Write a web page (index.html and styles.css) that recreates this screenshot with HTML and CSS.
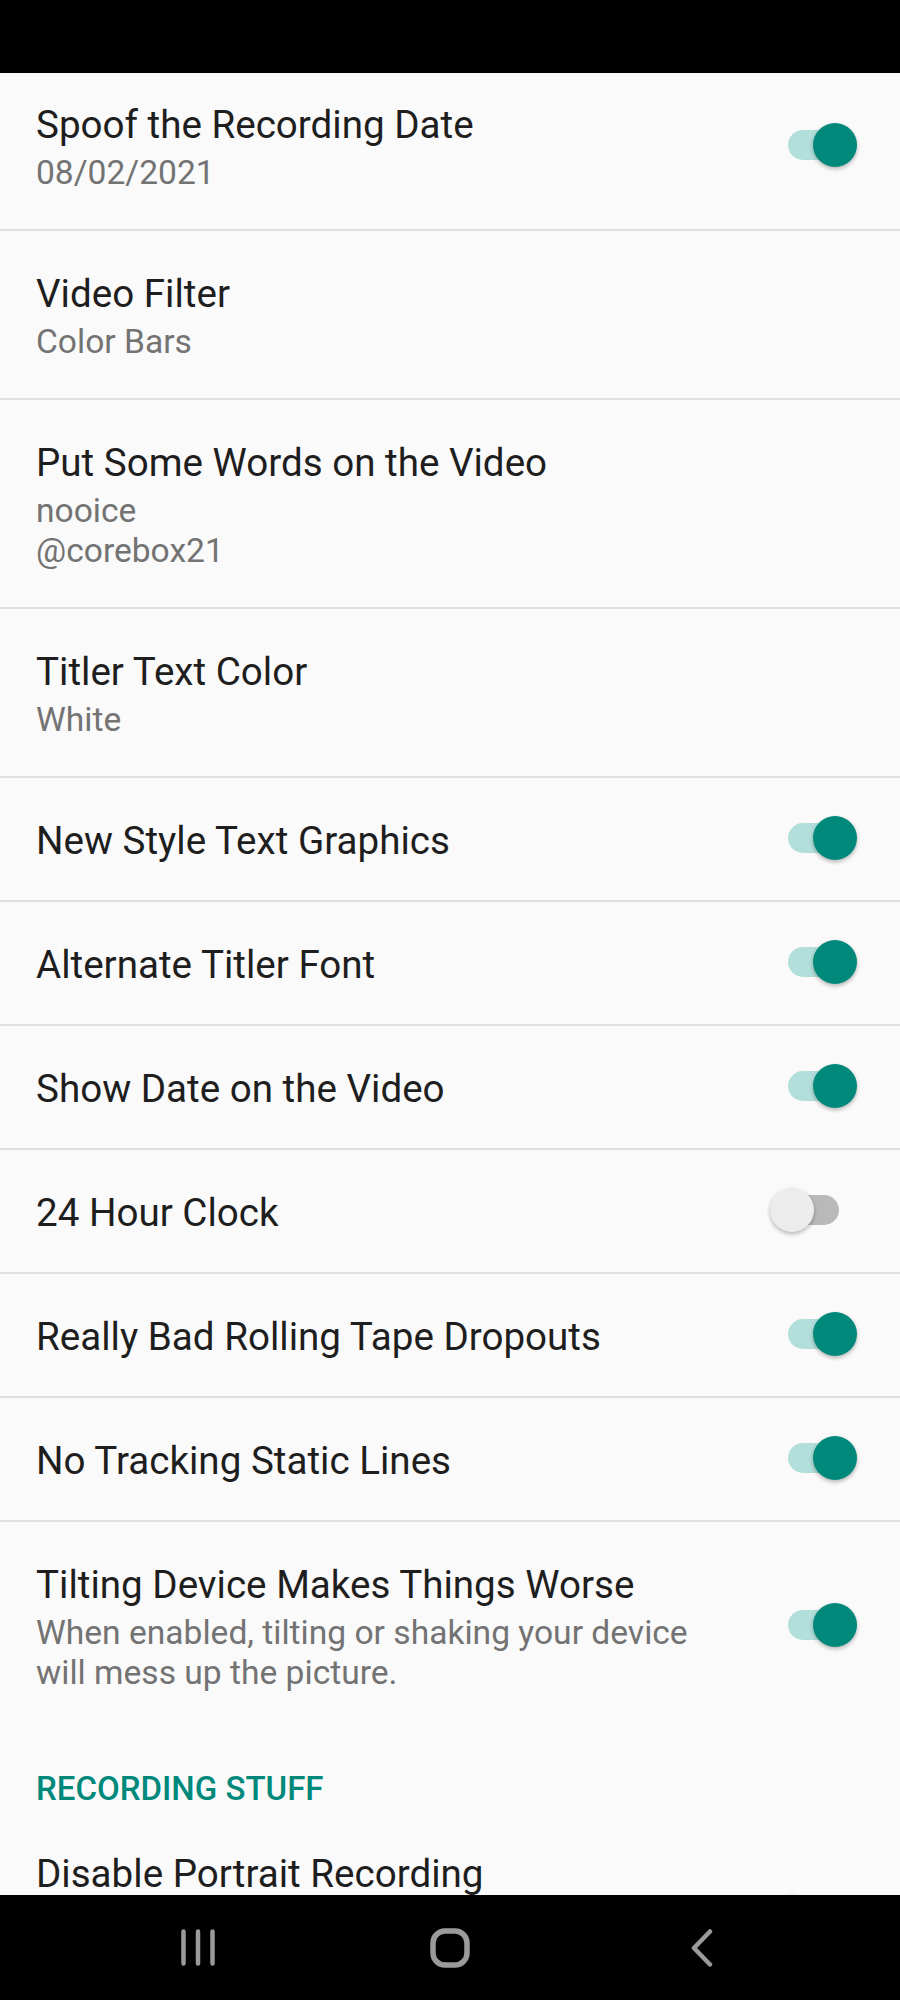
FILE: index.html
```html
<!DOCTYPE html>
<html lang="en">
<head>
    <meta charset="UTF-8">
    <title>Settings</title>
    <link rel="stylesheet" href="styles.css">
</head>
<body>
    <div class="status-bar"></div>

    <main class="settings">
        <div class="pref first">
            <div class="pref-text">
                <div class="pref-title">Spoof the Recording Date</div>
                <div class="pref-summary">08/02/2021</div>
            </div>
            <span class="switch on"><span class="track"></span><span class="thumb"></span></span>
        </div>
        <div class="pref">
            <div class="pref-text">
                <div class="pref-title">Video Filter</div>
                <div class="pref-summary">Color Bars</div>
            </div>
        </div>
        <div class="pref">
            <div class="pref-text">
                <div class="pref-title">Put Some Words on the Video</div>
                <div class="pref-summary">nooice<br>@corebox21</div>
            </div>
        </div>
        <div class="pref">
            <div class="pref-text">
                <div class="pref-title">Titler Text Color</div>
                <div class="pref-summary">White</div>
            </div>
        </div>
        <div class="pref">
            <div class="pref-text">
                <div class="pref-title">New Style Text Graphics</div>
            </div>
            <span class="switch on"><span class="track"></span><span class="thumb"></span></span>
        </div>
        <div class="pref">
            <div class="pref-text">
                <div class="pref-title">Alternate Titler Font</div>
            </div>
            <span class="switch on"><span class="track"></span><span class="thumb"></span></span>
        </div>
        <div class="pref">
            <div class="pref-text">
                <div class="pref-title">Show Date on the Video</div>
            </div>
            <span class="switch on"><span class="track"></span><span class="thumb"></span></span>
        </div>
        <div class="pref">
            <div class="pref-text">
                <div class="pref-title">24 Hour Clock</div>
            </div>
            <span class="switch"><span class="track"></span><span class="thumb"></span></span>
        </div>
        <div class="pref">
            <div class="pref-text">
                <div class="pref-title">Really Bad Rolling Tape Dropouts</div>
            </div>
            <span class="switch on"><span class="track"></span><span class="thumb"></span></span>
        </div>
        <div class="pref">
            <div class="pref-text">
                <div class="pref-title">No Tracking Static Lines</div>
            </div>
            <span class="switch on"><span class="track"></span><span class="thumb"></span></span>
        </div>
        <div class="pref group-end">
            <div class="pref-text">
                <div class="pref-title">Tilting Device Makes Things Worse</div>
                <div class="pref-summary">When enabled, tilting or shaking your device will mess up the picture.</div>
            </div>
            <span class="switch on"><span class="track"></span><span class="thumb"></span></span>
        </div>

        <div class="category">RECORDING STUFF</div>

        <div class="pref tall">
            <div class="pref-text">
                <div class="pref-title">Disable Portrait Recording</div>
            </div>
            <span class="switch"><span class="track"></span><span class="thumb"></span></span>
        </div>
    </main>

    <nav class="nav-bar">
        <span class="nav-key">
            <svg width="34" height="37" viewBox="0 0 34 37">
                <path d="M2.5 2.5V34.5M17 2.5V34.5M31.5 2.5V34.5" />
            </svg>
        </span>
        <span class="nav-key">
            <svg width="40" height="40" viewBox="0 0 40 40">
                <rect x="3" y="3" width="34" height="34" rx="12" />
            </svg>
        </span>
        <span class="nav-key">
            <svg width="24" height="38" viewBox="0 0 24 38">
                <path d="M20 2.5L4 19L20 35.5" />
            </svg>
        </span>
    </nav>
</body>
</html>
```

FILE: styles.css
```css
body {
    margin: 0;
    height: 2000px;
    overflow: hidden;
    display: flex;
    flex-direction: column;
    background-color: #fafafa;
    font-family: Roboto, "Noto Sans", sans-serif;
}
.status-bar {
    height: 73px;
    flex-shrink: 0;
    background-color: #000;
}
.settings {
    flex: 1;
    overflow: hidden;
}
.pref {
    display: flex;
    align-items: center;
    gap: 36px;
    padding: 40px 43px 36px 36px;
    border-bottom: 2px solid #e0e0e0;
}
.pref.first {
    padding-top: 29px;
}
.pref.group-end {
    border-bottom: none;
}
.pref.tall {
    min-height: 136px;
    border-bottom: none;
}
.pref.tall .pref-text {
    align-self: flex-start;
}
.pref-text {
    flex: 1;
    min-width: 0;
}
.pref-title {
    font-size: 38.6px;
    line-height: 46px;
    color: #1e1e1e;
}
.pref-summary {
    margin-top: 5px;
    font-size: 33.6px;
    line-height: 40px;
    color: #737373;
}
.category {
    padding: 40px 36px 2px;
    font-size: 33px;
    font-weight: 500;
    line-height: 40px;
    color: #00897b;
}

/* switch */
.switch {
    position: relative;
    width: 87px;
    height: 44px;
    margin-top: -6px;
    flex-shrink: 0;
}
.switch .track {
    position: absolute;
    left: 18px;
    top: 7px;
    width: 51px;
    height: 30px;
    border-radius: 15px;
    background-color: #b9b9b9;
}
.switch .thumb {
    position: absolute;
    left: 0;
    top: 0;
    width: 44px;
    height: 44px;
    border-radius: 50%;
    background-color: #ececec;
    box-shadow: 0 2px 4px rgba(0, 0, 0, 0.28);
}
.switch.on .track {
    background-color: #b2dfdb;
}
.switch.on .thumb {
    left: 43px;
    background-color: #00897b;
}

/* system nav */
.nav-bar {
    height: 105px;
    flex-shrink: 0;
    display: grid;
    grid-template-columns: repeat(3, 252px);
    justify-content: center;
    align-items: center;
    background-color: #000;
}
.nav-key {
    display: flex;
    justify-content: center;
}
.nav-key svg {
    fill: none;
    stroke: #9a9a9a;
    stroke-width: 4.5;
    stroke-linecap: round;
    stroke-linejoin: round;
}
.nav-key rect {
    stroke-width: 5.5;
}
```
